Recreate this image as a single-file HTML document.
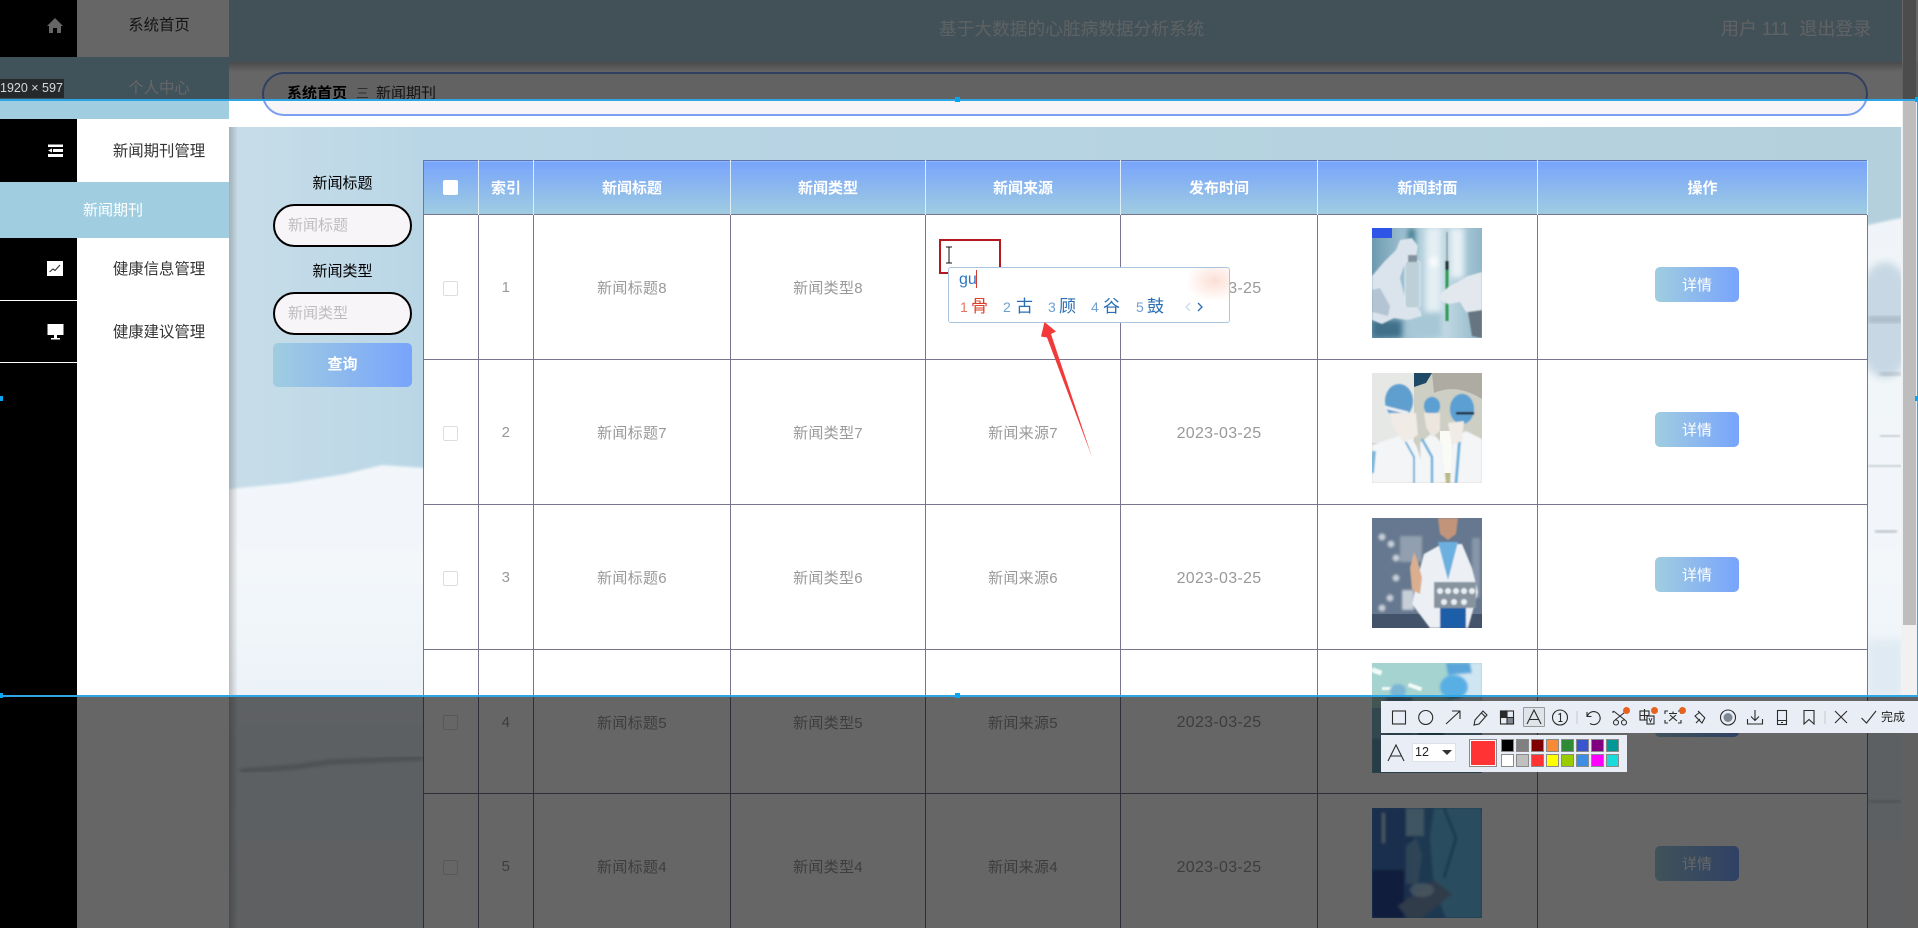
<!DOCTYPE html>
<html lang="zh-CN">
<head>
<meta charset="utf-8">
<title>基于大数据的心脏病数据分析系统</title>
<style>
*{box-sizing:border-box;margin:0;padding:0}
html,body{width:1918px;height:928px;overflow:hidden;background:#fff}
body{position:relative;font-family:"Liberation Sans","Noto Sans CJK SC",sans-serif;font-size:15px;color:#333}
.a{position:absolute}
.mi{position:absolute;left:77px;width:164px;text-align:center;color:#333;font-size:15.400px;line-height:20px}
.blk{position:absolute;left:0;width:77px;background:#000}
.lab{position:absolute;left:273px;width:139px;text-align:center;color:#000;font-size:15px;line-height:20px}
input{position:absolute;left:273px;width:139px;height:43px;border:2.500px solid #000;border-radius:22px;background:#f7f5f7;padding-left:13px;font:15px "Liberation Sans","Noto Sans CJK SC",sans-serif;outline:none}
input::placeholder{color:#bdbdbd;opacity:1}
table{position:absolute;left:423px;top:160px;width:1444px;border-collapse:collapse;table-layout:fixed;background:#fff}
th{height:54px;color:#fff;font-size:15px;font-weight:bold;border-left:1px solid #dfeef6;border-right:1px solid #dfeef6;border-top:1px solid #5f74b8;background:linear-gradient(#78a4fc,#a0cde0)}
th:first-child{border-left:1px solid #77758f}
td{height:145px;text-align:center;color:#999;font-size:15px;letter-spacing:.3px;border:1px solid #77758f;background:#fff;padding-top:1px}
tr.r4 td{height:144px}
td.dt{font-size:16px;letter-spacing:.3px;padding-top:3px}
.cb{display:inline-block;width:15px;height:15px;border:1px solid #ddd;border-radius:2px;background:#fff;vertical-align:middle;position:relative;left:-1px}
th .cb{border:0;width:15px;height:15px;top:-1px}
.ph{position:absolute;left:1372px;width:110px;height:110px;display:block}
.btn{position:absolute;left:1655px;width:84px;height:35px;border-radius:5px;background:linear-gradient(90deg,#a0cde0,#78a4fc);color:#fff;text-align:center;line-height:37px;font-size:15px}
.cand{position:absolute;top:296px;line-height:22px;font-size:17px;color:#2a6fb5}
.num{position:absolute;top:297px;line-height:20px;font-size:14px;color:#6f9fd0}
.sw{position:absolute;width:13px;height:13px;border:1px solid #8a8a8a}
</style>
</head>
<body>

<!-- main snow background -->
<svg class="a" style="left:229px;top:127px" width="1674" height="801" viewBox="229 127 1674 801">
<defs>
<linearGradient id="sky" x1="0" y1="0" x2="1" y2="0"><stop offset="0" stop-color="#c8dde9"/><stop offset=".12" stop-color="#b9d6e6"/><stop offset="1" stop-color="#b4d0dc"/></linearGradient>
<linearGradient id="snow" x1="0" y1="0" x2="0" y2="1"><stop offset="0" stop-color="#f0f4f8"/><stop offset=".5" stop-color="#f3f7fa"/><stop offset=".75" stop-color="#e7f0f7"/><stop offset="1" stop-color="#ecf1f4"/></linearGradient>
<filter id="b4"><feGaussianBlur stdDeviation="4"/></filter>
<filter id="b2"><feGaussianBlur stdDeviation="2.200"/></filter>
<filter id="b1"><feGaussianBlur stdDeviation="1.200"/></filter>
</defs>
<rect x="229" y="127" width="1674" height="801" fill="url(#sky)"/>
<polygon filter="url(#b1)" points="220,490 290,483 345,474 382,465 425,468 1868,225 1910,216 1910,940 220,940" fill="url(#snow)"/>
<ellipse cx="1885" cy="320" rx="30" ry="58" fill="#c7d8e4" filter="url(#b4)"/>
<rect x="1868" y="316" width="34" height="7" fill="#8d9aa4" opacity=".45" filter="url(#b2)"/>
<rect x="1880" y="372" width="22" height="4" fill="#7f8a92" opacity=".4" filter="url(#b2)"/>
<rect x="1880" y="435" width="20" height="2" fill="#a2acb4" opacity=".7" filter="url(#b1)"/>
<rect x="1868" y="465" width="34" height="2" fill="#a8b2b8" opacity=".7" filter="url(#b1)"/>
<rect x="1875" y="530" width="22" height="3" fill="#a8b0b6" opacity=".7" filter="url(#b1)"/>
<rect x="1868" y="640" width="34" height="55" fill="#dfeaf2" filter="url(#b4)"/>
<path d="M240 771 L270 769 L295 767 L330 762 L423 758" stroke="#23262a" stroke-width="3" fill="none" opacity=".32" filter="url(#b2)"/>
<rect x="1868" y="800" width="34" height="3" fill="#555" opacity=".3" filter="url(#b2)"/>
</svg>
<div class="a" style="left:1901px;top:62px;width:17px;height:866px;background:#f1f1f1"></div>
<div class="a" style="left:1903px;top:0;width:13px;height:625px;background:#bdbdbd"></div>
<div class="a" style="left:229px;top:127px;width:9px;height:801px;background:linear-gradient(90deg,rgba(90,90,90,.35),rgba(90,90,90,0))"></div>

<!-- header -->
<div class="a" style="left:229px;top:0;width:1673px;height:62px;background:#a5c8dc"></div>
<div class="a" style="left:229px;top:62px;width:1673px;height:65px;background:#fff"></div>
<div class="a" style="left:229px;top:62px;width:1673px;height:10px;background:linear-gradient(rgba(0,0,0,.28),rgba(0,0,0,0))"></div>
<div class="a" style="left:939px;top:17px;width:270px;line-height:24px;font-size:17.700px;color:#e8f4fa;white-space:nowrap">基于大数据的心脏病数据分析系统</div>
<div class="a" style="left:1721px;top:17px;width:170px;line-height:24px;font-size:18px;color:#f2f6f8;white-space:nowrap">用户 111&nbsp; 退出登录</div>

<!-- breadcrumb pill -->
<div class="a" style="left:262px;top:72px;width:1606px;height:44px;border:2px solid #7a9ff0;border-radius:22px;background:#f7f5f7"></div>
<div class="a" style="left:287px;top:84px;line-height:20px;font-size:15px;font-weight:bold;color:#000;white-space:nowrap">系统首页</div>
<div class="a" style="left:356px;top:84px;line-height:20px;font-size:13px;color:#777;white-space:nowrap">三</div>
<div class="a" style="left:376px;top:84px;line-height:20px;font-size:15px;color:#333;white-space:nowrap">新闻期刊</div>

<!-- sidebar -->
<div class="a" style="left:77px;top:0;width:152px;height:928px;background:#fff"></div>
<div class="blk" style="top:0;height:57px"></div>
<div class="a" style="left:0;top:57px;width:229px;height:62px;background:#a0cde0"></div>
<div class="blk" style="top:119px;height:63px"></div>
<div class="a" style="left:0;top:182px;width:229px;height:56px;background:#a0cde0"></div>
<div class="blk" style="top:238px;height:62px"></div>
<div class="blk" style="top:301px;height:61px"></div>
<div class="blk" style="top:363px;height:565px"></div>
<div class="mi" style="top:16px">系统首页</div>
<div class="mi" style="top:79px;color:#fff">个人中心</div>
<div class="mi" style="top:142px">新闻期刊管理</div>
<div class="a" style="left:0;top:201px;width:226px;text-align:center;color:#fff;font-size:15px;line-height:20px">新闻期刊</div>
<div class="mi" style="top:260px">健康信息管理</div>
<div class="mi" style="top:323px">健康建议管理</div>
<svg class="a" style="left:46px;top:17px" width="18" height="17" viewBox="0 0 18 17"><path d="M9 1 L17 9 L15 9 L15 16 L11 16 L11 11 L7 11 L7 16 L3 16 L3 9 L1 9 Z" fill="#fff"/></svg>
<svg class="a" style="left:47px;top:143px" width="17" height="15" viewBox="0 0 17 15"><path d="M1 1.500H16V4H1ZM6 6H16V9H6ZM1 11H16V14H1ZM5 5.500V9.500L1 7.500Z" fill="#fff"/></svg>
<svg class="a" style="left:47px;top:261px" width="16" height="16" viewBox="0 0 16 16"><rect width="16" height="15" fill="#fff"/><path d="M2.500 11 L6 8 L8 9.500 L13 4" stroke="#333" stroke-width="1.100" fill="none"/></svg>
<svg class="a" style="left:47px;top:324px" width="17" height="16" viewBox="0 0 17 16"><rect x=".5" y="0" width="16" height="11" fill="#fff"/><rect x="7" y="11" width="3" height="3" fill="#fff"/><rect x="4" y="14" width="9" height="1.500" fill="#fff"/></svg>

<!-- search form -->
<div class="lab" style="top:174px">新闻标题</div>
<input type="text" placeholder="新闻标题" style="top:204px">
<div class="lab" style="top:262px">新闻类型</div>
<input type="text" placeholder="新闻类型" style="top:292px">
<div class="a" style="left:273px;top:343px;width:139px;height:44px;border-radius:5px;background:linear-gradient(90deg,#a0cde0,#78a4fc);color:#fff;font-weight:bold;text-align:center;line-height:43px;font-size:15px">查询</div>

<!-- table -->
<table>
<colgroup><col style="width:55px"><col style="width:55px"><col style="width:197px"><col style="width:195px"><col style="width:195px"><col style="width:197px"><col style="width:220px"><col style="width:330px"></colgroup>
<thead><tr><th><span class="cb"></span></th><th>索引</th><th>新闻标题</th><th>新闻类型</th><th>新闻来源</th><th>发布时间</th><th>新闻封面</th><th>操作</th></tr></thead>
<tbody>
<tr><td><span class="cb"></span></td><td>1</td><td>新闻标题8</td><td>新闻类型8</td><td></td><td class="dt">2023-03-25</td><td></td><td></td></tr>
<tr><td><span class="cb"></span></td><td>2</td><td>新闻标题7</td><td>新闻类型7</td><td>新闻来源7</td><td class="dt">2023-03-25</td><td></td><td></td></tr>
<tr><td><span class="cb"></span></td><td>3</td><td>新闻标题6</td><td>新闻类型6</td><td>新闻来源6</td><td class="dt">2023-03-25</td><td></td><td></td></tr>
<tr class="r4"><td><span class="cb"></span></td><td>4</td><td>新闻标题5</td><td>新闻类型5</td><td>新闻来源5</td><td class="dt">2023-03-25</td><td></td><td></td></tr>
<tr><td><span class="cb"></span></td><td>5</td><td>新闻标题4</td><td>新闻类型4</td><td>新闻来源4</td><td class="dt">2023-03-25</td><td></td><td></td></tr>
</tbody>
</table>

<!-- photo 1 -->
<svg class="ph" style="top:228px" viewBox="0 0 110 110">
<defs>
<linearGradient id="p1" x1="0" x2="1" y1="0" y2="0"><stop offset="0" stop-color="#6d9ab0"/><stop offset=".3" stop-color="#9fc2d2"/><stop offset=".6" stop-color="#cbdfe8"/><stop offset="1" stop-color="#8fb6c8"/></linearGradient>
<filter id="s"><feGaussianBlur stdDeviation=".7"/></filter>
<filter id="s1"><feGaussianBlur stdDeviation="1.300"/></filter>
<filter id="s2"><feGaussianBlur stdDeviation="3"/></filter>
</defs>
<rect width="110" height="110" fill="url(#p1)"/>
<g filter="url(#s2)"><rect x="54" y="0" width="14" height="90" fill="#e4eff4"/><rect x="36" y="0" width="7" height="26" fill="#3f7a90"/><rect x="78" y="0" width="14" height="50" fill="#e6f0f5"/><rect x="40" y="84" width="30" height="26" fill="#a6c7d6"/><rect x="0" y="92" width="30" height="18" fill="#3f6f8a"/><rect x="58" y="30" width="8" height="8" fill="#fff"/></g>
<g filter="url(#s)">
<path d="M0 48 L12 34 L24 22 L28 12 L40 10 L46 18 L44 30 L32 38 L28 50 L34 74 L48 82 L50 88 L36 92 L22 90 L10 96 L0 92Z" fill="#dbe4ec"/>
<path d="M0 62 L8 60 L18 78 L16 88 L0 84Z" fill="#b4c4d2"/>
<rect x="33" y="33" width="15" height="47" rx="3" fill="#bdd0d8" stroke="#eaf2f5" stroke-width=".8"/>
<rect x="36" y="27" width="9" height="7" fill="#83929c"/>
<rect x="74.500" y="4" width="1" height="30" fill="#6b7b82"/>
<rect x="73.500" y="33" width="3" height="9" fill="#1f2d2d"/>
<rect x="73.500" y="42" width="3" height="51" fill="#2a9a50"/>
<path d="M110 44 L96 48 L78 58 L68 66 L68 72 L76 76 L88 74 L94 84 L110 84Z" fill="#e2e8ee"/>
<path d="M96 84 L110 82 L110 110 L100 108Z" fill="#66757f"/>
</g>
<rect width="20" height="10" fill="#2e55e8"/>
</svg>

<!-- photo 2 -->
<svg class="ph" style="top:373px" viewBox="0 0 110 110">
<rect width="110" height="110" fill="#cdcec4"/>
<rect width="42" height="70" fill="#e6e8e6"/>
<path d="M42 0 H60 L54 10 L42 14Z" fill="#1f4a66"/>
<path d="M60 0 H110 V26 Q84 10 62 20Z" fill="#aeaca2"/>
<rect x="68" y="58" width="12" height="44" fill="#fbfbf6"/>
<rect x="68" y="100" width="12" height="10" fill="#b9b98a"/>
<g filter="url(#s)">
<path d="M0 110 L0 72 L18 66 L34 60 L44 72 L50 90 L50 110Z" fill="#f3f5f7"/>
<path d="M32 66 L42 84 L42 110" stroke="#6fb2dc" stroke-width="2" fill="none"/>
<path d="M2 78 L0 100" stroke="#7fb8dc" stroke-width="4" fill="none"/>
<ellipse cx="27" cy="28" rx="14" ry="17" fill="#5f9fcf"/>
<path d="M18 40 L44 40 L46 62 L32 70 L22 56Z" fill="#f0ebe5"/>
<path d="M12 34 L36 40" stroke="#e9eef2" stroke-width="3"/>
<path d="M50 110 L48 70 L60 60 L70 70 L74 110Z" fill="#f3f5f7"/>
<path d="M50 66 L60 84 L60 110" stroke="#6fb2dc" stroke-width="2.500" fill="none"/>
<ellipse cx="60" cy="33" rx="8" ry="9" fill="#5c9fd2"/>
<path d="M52 40 H68 L68 58 L60 64 L54 54Z" fill="#ece6df"/>
<path d="M78 110 L80 66 L94 58 L110 66 L110 110Z" fill="#f3f5f7"/>
<path d="M88 62 L84 110" stroke="#6fb2dc" stroke-width="3" fill="none"/>
<ellipse cx="90" cy="36" rx="12" ry="15" fill="#5c9fd2"/>
<rect x="84" y="39" width="18" height="2.500" fill="#222"/>
<path d="M76 50 L92 48 L90 68 L80 72Z" fill="#f0ebe5"/>
</g>
</svg>

<!-- photo 3 -->
<svg class="ph" style="top:518px" viewBox="0 0 110 110">
<rect width="110" height="110" fill="#66788f"/>
<rect y="96" width="110" height="14" fill="#43536a"/>
<g filter="url(#s1)">
<g fill="#d8dde4" opacity=".85"><circle cx="10" cy="19" r="3.500"/><circle cx="19" cy="26" r="3.500"/><circle cx="24" cy="40" r="3.500"/><circle cx="24" cy="60" r="3.500"/><circle cx="18" cy="80" r="3.500"/><circle cx="10" cy="90" r="3.500"/><rect x="30" y="72" width="12" height="20"/><rect x="28" y="18" width="22" height="26" opacity=".45"/><rect x="100" y="20" width="8" height="60" opacity=".35"/></g>
</g>
<g filter="url(#s)">
<path d="M58 110 L40 86 L46 58 L52 36 L70 26 L90 26 L100 50 L106 74 L96 110Z" fill="#ecf0f5"/>
<path d="M66 24 L76 62 L86 24Z" fill="#6cb0e0"/>
<path d="M66 0 H86 L84 16 L76 22 L68 16Z" fill="#c2947a"/>
<path d="M38 50 L42 34 L46 44 L50 60 L48 76 L40 72Z" fill="#dcae90"/>
<rect x="62" y="64" width="42" height="26" fill="#87949f"/>
<g fill="#e7edf3"><circle cx="68" cy="73" r="3"/><circle cx="76" cy="73" r="3"/><circle cx="84" cy="73" r="3"/><circle cx="92" cy="73" r="3"/><circle cx="100" cy="73" r="3"/><circle cx="72" cy="84" r="3"/><circle cx="82" cy="84" r="3"/><circle cx="92" cy="84" r="3"/></g>
<rect x="68" y="90" width="26" height="20" fill="#1f5fa8"/>
</g>
</svg>

<!-- photo 4 -->
<svg class="ph" style="top:663px" viewBox="0 0 110 110">
<rect width="110" height="110" fill="#a5d3cf"/>
<g fill="#f2fbf8" filter="url(#s)"><rect x="0" y="6" width="10" height="5" transform="rotate(20 5 8)"/><rect x="36" y="22" width="14" height="4" transform="rotate(20 43 24)"/><rect x="10" y="24" width="12" height="3"/></g>
<rect y="45" width="110" height="65" fill="#7fb5c4"/>
<g filter="url(#s1)">
<path d="M80 0 H110 V60 H70 L82 34Z" fill="#cfe6f2"/>
<ellipse cx="82" cy="24" rx="14" ry="12" fill="#58afe4"/>
<path d="M74 0 H98 L100 10 L76 12Z" fill="#5aa6da"/>
<ellipse cx="26" cy="28" rx="8" ry="7" fill="#7ab5d4"/>
<rect x="14" y="34" width="26" height="50" fill="#6a9fba"/>
<rect x="46" y="50" width="26" height="50" fill="#3f7d9a"/>
<rect x="0" y="76" width="110" height="34" fill="#5f96ae"/>
</g>
</svg>

<!-- photo 5 -->
<svg class="ph" style="top:808px" viewBox="0 0 110 110">
<rect width="110" height="110" fill="#4a8fcb"/>
<g filter="url(#s1)">
<rect width="42" height="110" fill="#3f77c0"/>
<rect x="0" y="62" width="32" height="48" fill="#2c4a98"/>
<rect x="34" y="0" width="18" height="28" fill="#9ed4f4"/>
<rect x="10" y="5" width="3" height="30" fill="#b6dcf2"/>
<path d="M62 0 H110 V110 H74 L62 80 L58 30Z" fill="#68c0ec"/>
<path d="M72 0 L84 30 L72 70" stroke="#3f92c4" stroke-width="3" fill="none"/>
<path d="M34 38 L44 30 L50 46 L46 76 L34 76Z" fill="#80b4dc" opacity=".8"/>
<path d="M26 98 L62 72 L80 86 L50 110 L36 110Z" fill="#7896ba"/>
<ellipse cx="50" cy="82" rx="12" ry="7" fill="#c6e6fa" opacity=".7"/>
</g>
</svg>

<div class="btn" style="top:267px">详情</div>
<div class="btn" style="top:412px">详情</div>
<div class="btn" style="top:557px">详情</div>
<div class="btn" style="top:702px">详情</div>
<div class="btn" style="top:846px">详情</div>

<!-- red box -->
<div class="a" style="left:939px;top:239px;width:62px;height:35px;border:2px solid #b5191f"></div>
<svg class="a" style="left:944px;top:245px" width="10" height="20" viewBox="0 0 10 20"><path d="M2 2 H8 M5 2 V18 M2 18 H8" stroke="#111" stroke-width="1" fill="none"/></svg>

<!-- IME popup -->
<div class="a" style="left:947.500px;top:267px;width:282px;height:56px;background:#fff;border:1px solid #a9c5e2;border-radius:3px"></div>
<div class="a" style="left:1188px;top:268px;width:41px;height:32px;background:radial-gradient(ellipse at 65% 40%,rgba(250,200,185,.6),rgba(255,225,215,.3) 55%,rgba(255,255,255,0) 78%)"></div>
<div class="a" style="left:959px;top:270px;line-height:20px;font-size:16px;color:#2e75c0">gu</div>
<div class="a" style="left:976px;top:270px;width:1px;height:18px;background:#d0392b"></div>
<div class="num" style="left:960px;color:#ef7060">1</div><div class="cand" style="left:971px;color:#d8402a">骨</div>
<div class="num" style="left:1003px">2</div><div class="cand" style="left:1016px">古</div>
<div class="num" style="left:1048px">3</div><div class="cand" style="left:1059px">顾</div>
<div class="num" style="left:1091px">4</div><div class="cand" style="left:1103px">谷</div>
<div class="num" style="left:1136px">5</div><div class="cand" style="left:1147px">鼓</div>
<svg class="a" style="left:1183px;top:300px" width="26" height="14" viewBox="0 0 26 14"><path d="M7 3 L3 7 L7 11" stroke="#c7dcef" stroke-width="1.300" fill="none"/><path d="M15 3 L19 7 L15 11" stroke="#2a6fb5" stroke-width="1.300" fill="none"/></svg>

<!-- red arrow -->
<svg class="a" style="left:1030px;top:315px" width="70" height="150" viewBox="1030 315 70 150"><polygon points="1044.500,322 1056,331.500 1051,334 1092,457 1047,337.500 1041,336.500" fill="#f23a3a"/></svg>

<!-- dim overlay -->
<div class="a" style="left:0;top:0;width:1918px;height:99px;background:rgba(0,0,0,.6)"></div>
<div class="a" style="left:0;top:696px;width:1918px;height:232px;background:rgba(0,0,0,.6)"></div>
<!-- selection outline -->
<div class="a" style="left:0;top:99px;width:1918px;height:1.500px;background:#2ea6e6"></div>
<div class="a" style="left:0;top:695px;width:1918px;height:1.500px;background:#2ea6e6"></div>
<div class="a" style="left:1917px;top:99px;width:1px;height:597px;background:#2ea6e6"></div>
<div class="a" style="left:955px;top:97px;width:5px;height:5px;background:#0aa5f0"></div>
<div class="a" style="left:955px;top:693px;width:5px;height:5px;background:#0aa5f0"></div>
<div class="a" style="left:1915px;top:396px;width:3px;height:5px;background:#0aa5f0"></div>
<div class="a" style="left:0;top:396px;width:3px;height:5px;background:#0aa5f0"></div>
<div class="a" style="left:0;top:693px;width:3px;height:5px;background:#0aa5f0"></div>
<div class="a" style="left:1915px;top:97px;width:3px;height:5px;background:#0aa5f0"></div>
<div class="a" style="left:0;top:79px;width:64px;height:19px;background:#26292b;color:#d8d8d8;font-size:12.500px;line-height:19px;white-space:nowrap">1920 × 597</div>

<!-- toolbar 1 -->
<div class="a" style="left:1381px;top:701px;width:537px;height:32px;background:#e9eef6"></div>
<div class="a" style="left:1523px;top:707px;width:22px;height:20px;background:#dfe3ea;border:1px solid #9a9a9a;border-radius:1px"></div>
<svg class="a" style="left:1381px;top:701px" width="537" height="32" viewBox="1381 701 537 32" fill="none" stroke="#2b2b2b" stroke-width="1.100">
<rect x="1392.500" y="711" width="13" height="13"/>
<circle cx="1425.700" cy="717.500" r="7"/>
<path d="M1446 724 L1460 711 M1452 711 H1460 V719"/>
<path d="M1475 720 L1483 711 L1487 715 L1479 724 L1474 725Z M1481.500 713 L1485 716.500"/>
<rect x="1500.500" y="711" width="13" height="13"/>
<rect x="1500.500" y="711" width="6.500" height="6.500" fill="#2b2b2b"/>
<rect x="1507" y="717.500" width="6.500" height="6.500" fill="#7e8794"/>
<path d="M1527 724 L1534 710 L1541 724 M1529.500 719.500 H1538.500"/>
<circle cx="1560" cy="717.500" r="7.500"/>
<path d="M1558.500 714.500 L1560.500 713.500 V721.500 M1558.500 721.500 H1562.500"/>
<path d="M1577 711 V724" stroke="#c8ccd4"/>
<path d="M1587 712 V716.500 H1591.500 M1587.500 716 A6.500 6.500 0 1 1 1590 723.500"/>
<path d="M1613.500 711 L1625 720 M1626.500 711 L1615 720 M1613 711 V713 M1627 711 V713"/>
<circle cx="1616" cy="722.500" r="2.500"/><circle cx="1624" cy="722.500" r="2.500"/>
<rect x="1640" y="711" width="9" height="9"/><path d="M1644.500 709 V720 M1640 715.500 H1649"/><rect x="1647" y="716" width="7" height="8" fill="#e9eef6"/>
<path d="M1649 718 L1650.500 722 L1652 718" stroke-width=".9"/>
<path d="M1665 714 V711 H1668 M1678 711 H1681 V714 M1665 720 V723 H1668 M1678 723 H1681 V720"/>
<path d="M1669 713.500 H1677 M1673 711.500 V713.500 M1670 715 L1677 721 M1676 715 L1669 721"/>
<path d="M1696 723 L1700 719 M1698 711 L1705 718 M1700 712 L1695 716 L1702 723 L1705 717.500"/>
<circle cx="1728" cy="717.500" r="7.500"/>
<circle cx="1728" cy="717.500" r="4.500" fill="#7e8794" stroke="none"/>
<path d="M1755 710 V720 M1751 716.500 L1755 720.500 L1759 716.500 M1747.500 719 V724 H1762.500 V719"/>
<rect x="1777.500" y="710.500" width="9" height="14"/><path d="M1777.500 720.500 H1786.500 M1781 722.500 H1783"/>
<path d="M1804 710.500 H1814 V724 L1809 719.500 L1804 724Z"/>
<path d="M1825 711 V724" stroke="#c8ccd4"/>
<path d="M1835 711 L1847 723 M1847 711 L1835 723"/>
<path d="M1861.500 718 L1866.500 723 L1876 711"/>
</svg>
<div class="a" style="left:1623px;top:706.500px;width:7px;height:7px;border-radius:50%;background:#e8621f"></div>
<div class="a" style="left:1651px;top:706.500px;width:7px;height:7px;border-radius:50%;background:#e8621f"></div>
<div class="a" style="left:1679px;top:706.500px;width:7px;height:7px;border-radius:50%;background:#e8621f"></div>
<div class="a" style="left:1881px;top:709px;line-height:17px;font-size:12px;color:#222;white-space:nowrap">完成</div>

<!-- toolbar 2 -->
<div class="a" style="left:1381px;top:735px;width:246px;height:37px;background:#e9eef6"></div>
<svg class="a" style="left:1386px;top:743px" width="20" height="20" viewBox="0 0 20 20" fill="none" stroke="#2b2b2b" stroke-width="1.100"><path d="M2 18 L10 2 L18 18 M5 13 H15"/></svg>
<div class="a" style="left:1412px;top:743px;width:44px;height:19px;background:#fff;border:1px solid #dde1e8"></div>
<div class="a" style="left:1415px;top:743px;line-height:19px;font-size:12.500px;color:#222">12</div>
<div class="a" style="left:1442px;top:750px;width:0;height:0;border-left:5px solid transparent;border-right:5px solid transparent;border-top:5px solid #333"></div>
<div class="a" style="left:1469px;top:739px;width:28px;height:28px;background:#ff3333;border:1px solid #8a8a8a;box-shadow:inset 0 0 0 1px #fff"></div>
<div class="sw" style="left:1501px;top:739px;background:#000"></div>
<div class="sw" style="left:1516px;top:739px;background:#808080"></div>
<div class="sw" style="left:1531px;top:739px;background:#800000"></div>
<div class="sw" style="left:1546px;top:739px;background:#f78a35"></div>
<div class="sw" style="left:1561px;top:739px;background:#2f8b36"></div>
<div class="sw" style="left:1576px;top:739px;background:#3a55d0"></div>
<div class="sw" style="left:1591px;top:739px;background:#800080"></div>
<div class="sw" style="left:1606px;top:739px;background:#009797"></div>
<div class="sw" style="left:1501px;top:754px;background:#fff"></div>
<div class="sw" style="left:1516px;top:754px;background:#c0c0c0"></div>
<div class="sw" style="left:1531px;top:754px;background:#f33"></div>
<div class="sw" style="left:1546px;top:754px;background:#ff0"></div>
<div class="sw" style="left:1561px;top:754px;background:#99cc00"></div>
<div class="sw" style="left:1576px;top:754px;background:#3a8fe5"></div>
<div class="sw" style="left:1591px;top:754px;background:#f0f"></div>
<div class="sw" style="left:1606px;top:754px;background:#1adbdb"></div>

</body>
</html>
